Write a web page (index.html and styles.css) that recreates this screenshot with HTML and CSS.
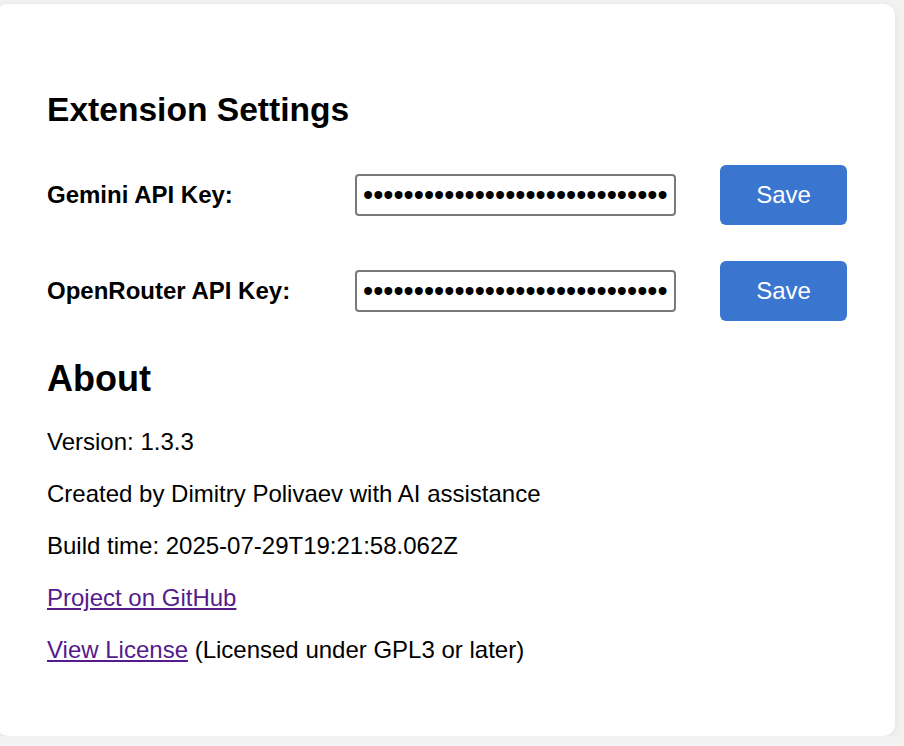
FILE: index.html
```html
<!DOCTYPE html>
<html lang="en">
<head>
<meta charset="utf-8">
<title>Extension Settings</title>
<link rel="stylesheet" href="styles.css">
</head>
<body>
<div class="card">
  <h1 class="title">Extension Settings</h1>
  <div class="row">
    <label class="label" for="gemini">Gemini API Key:</label>
    <input class="key" id="gemini" type="password" value="abcdefghijklmnopqrstuvwxyzabcdefghijklmn">
    <button class="save" type="button">Save</button>
  </div>
  <div class="row">
    <label class="label" for="openrouter">OpenRouter API Key:</label>
    <input class="key" id="openrouter" type="password" value="abcdefghijklmnopqrstuvwxyzabcdefghijklmn">
    <button class="save" type="button">Save</button>
  </div>
  <h2 class="about">About</h2>
  <p class="info">Version: 1.3.3</p>
  <p class="info">Created by Dimitry Polivaev with AI assistance</p>
  <p class="info">Build time: 2025-07-29T19:21:58.062Z</p>
  <p class="info"><a class="link" href="#">Project on GitHub</a></p>
  <p class="info"><a class="link" href="#">View License</a> (Licensed under GPL3 or later)</p>
</div>
</body>
</html>
```

FILE: styles.css
```css
html, body {
  margin: 0;
  padding: 0;
  background: #f2f2f2;
  font-family: "Liberation Sans", Arial, sans-serif;
  color: #000;
}

.card {
  box-sizing: border-box;
  margin: 4px 9px 0 -4px;
  height: 732px;
  background: #fff;
  border-radius: 12px;
  box-shadow: 0 2px 8px rgba(0, 0, 0, 0.08);
  padding: 87px 48px 0 51px;
}

.title {
  margin: 0;
  font-size: 33.6px;
  font-weight: bold;
  line-height: 38px;
}

.row {
  display: flex;
  align-items: center;
  height: 60px;
  margin-top: 36px;
}

.label {
  width: 308px;
  flex-shrink: 0;
  font-size: 24px;
  font-weight: bold;
  line-height: 28px;
}

.key {
  box-sizing: border-box;
  width: 321px;
  height: 42px;
  margin: 0;
  padding: 0 6px;
  border: 2px solid #7a7a7a;
  border-radius: 4px;
  background: #fff;
  font-family: "Liberation Sans", Arial, sans-serif;
  font-size: 29px;
  color: #000;
  outline: none;
}

.save {
  box-sizing: border-box;
  width: 127px;
  height: 60px;
  margin-left: 44px;
  border: none;
  border-radius: 6px;
  background: #3a76d0;
  color: #fff;
  font-family: "Liberation Sans", Arial, sans-serif;
  font-size: 24px;
  padding: 0;
}

.about {
  margin: 37px 0 0;
  font-size: 36px;
  font-weight: bold;
  line-height: 42px;
}

.info {
  margin: 0;
  font-size: 24px;
  line-height: 28px;
}

.about + .info {
  margin-top: 28px;
}

.info + .info {
  margin-top: 24px;
}

.link {
  color: #551a8b;
  text-decoration: underline;
}
```
